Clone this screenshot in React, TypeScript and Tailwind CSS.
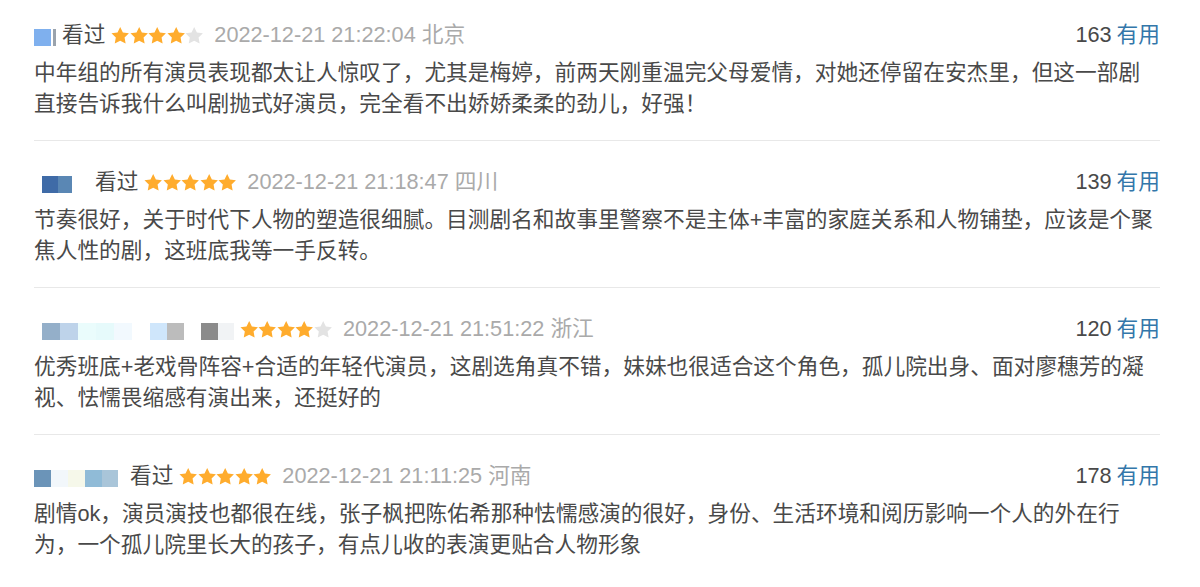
import React from "react";

type Review = {
  mosaic: { w: number; c: string }[];
  seen: boolean;
  stars: number;
  time: string;
  place: string;
  votes: number;
  lines: string[];
};

const reviews: Review[] = [
  {
    mosaic: [
      { w: 17, c: "#7fb0ee" },
      { w: 2, c: "#ffffff" },
      { w: 3, c: "#9aa3ad" },
    ],
    seen: true,
    stars: 4,
    time: "2022-12-21 21:22:04",
    place: "北京",
    votes: 163,
    lines: [
      "中年组的所有演员表现都太让人惊叹了，尤其是梅婷，前两天刚重温完父母爱情，对她还停留在安杰里，但这一部剧",
      "直接告诉我什么叫剧抛式好演员，完全看不出娇娇柔柔的劲儿，好强！",
    ],
  },
  {
    mosaic: [
      { w: 8, c: "#ffffff" },
      { w: 16, c: "#3f6ba7" },
      { w: 14, c: "#5a87b4" },
      { w: 17, c: "#ffffff" },
    ],
    seen: true,
    stars: 5,
    time: "2022-12-21 21:18:47",
    place: "四川",
    votes: 139,
    lines: [
      "节奏很好，关于时代下人物的塑造很细腻。目测剧名和故事里警察不是主体+丰富的家庭关系和人物铺垫，应该是个聚",
      "焦人性的剧，这班底我等一手反转。",
    ],
  },
  {
    mosaic: [
      { w: 8, c: "#ffffff" },
      { w: 18, c: "#94afc9" },
      { w: 18, c: "#bed3ea" },
      { w: 18, c: "#eafcfc" },
      { w: 18, c: "#e6fafb" },
      { w: 18, c: "#f2f9fe" },
      { w: 18, c: "#ffffff" },
      { w: 17, c: "#cfe6fb" },
      { w: 17, c: "#bcbcbc" },
      { w: 17, c: "#ffffff" },
      { w: 17, c: "#8b8b8b" },
      { w: 16, c: "#f1f3f5" },
    ],
    seen: false,
    stars: 4,
    time: "2022-12-21 21:51:22",
    place: "浙江",
    votes: 120,
    lines: [
      "优秀班底+老戏骨阵容+合适的年轻代演员，这剧选角真不错，妹妹也很适合这个角色，孤儿院出身、面对廖穗芳的凝",
      "视、怯懦畏缩感有演出来，还挺好的",
    ],
  },
  {
    mosaic: [
      { w: 17, c: "#6b94b8" },
      { w: 17, c: "#f2f7fb" },
      { w: 17, c: "#f6f8ea" },
      { w: 17, c: "#90bbd7" },
      { w: 16, c: "#a9c5d9" },
      { w: 6, c: "#ffffff" },
    ],
    seen: true,
    stars: 5,
    time: "2022-12-21 21:11:25",
    place: "河南",
    votes: 178,
    lines: [
      "剧情ok，演员演技也都很在线，张子枫把陈佑希那种怯懦感演的很好，身份、生活环境和阅历影响一个人的外在行",
      "为，一个孤儿院里长大的孩子，有点儿收的表演更贴合人物形象",
    ],
  },
];

const Star = ({ on }: { on: boolean }) => (
  <svg width="18.4" height="19" viewBox="0 0 24 24" className="shrink-0">
    <path
      d="M12 .8l3.5 7.2 7.9 1.1-5.7 5.6 1.4 7.9L12 18.9l-7.1 3.7 1.4-7.9L.6 9.1 8.5 8z"
      fill={on ? "#ffac2d" : "#e3e3e3"}
    />
  </svg>
);

const Mosaic = ({ blocks }: { blocks: { w: number; c: string }[] }) => (
  <div className="flex items-end h-[28px] pb-[3px]">
    {blocks.map((b, i) => (
      <div key={i} className="h-[17px]" style={{ width: b.w, background: b.c }} />
    ))}
  </div>
);

export default function App() {
  return (
    <div className="w-[1200px] h-[587px] bg-white overflow-hidden font-['Liberation_Sans','Noto_Sans_CJK_SC',sans-serif]">
      <div className="flex flex-col pl-[34px] pr-[40px] -mt-[6px]">
        {reviews.map((r, i) => (
          <div
            key={i}
            className={`flex flex-col gap-[8px] pt-[27px] pb-[21px] ${
              i < reviews.length - 1 ? "border-b border-[#e8e8e8]" : ""
            }`}
          >
            {/* header */}
            <div className="flex items-center justify-between h-[28px] text-[21.7px] leading-[28px]">
              <div className="flex items-center">
                <Mosaic blocks={r.mosaic} />
                {r.seen && <span className="ml-[6px] text-[#494949]">看过</span>}
                <div className="flex items-center ml-[6px]">
                  {[0, 1, 2, 3, 4].map((s) => (
                    <Star key={s} on={s < r.stars} />
                  ))}
                </div>
                <span className="ml-[11px] text-[#aaaaaa]">
                  {r.time} {r.place}
                </span>
              </div>
              <div className="flex items-center gap-[5px]">
                <span className="text-[#494949]">{r.votes}</span>
                <span className="text-[#3377aa]">有用</span>
              </div>
            </div>
            {/* body */}
            <div className="flex flex-col text-[21.7px] leading-[31px] text-[#494949] whitespace-nowrap">
              {r.lines.map((l, j) => (
                <p key={j}>{l}</p>
              ))}
            </div>
          </div>
        ))}
      </div>
    </div>
  );
}
